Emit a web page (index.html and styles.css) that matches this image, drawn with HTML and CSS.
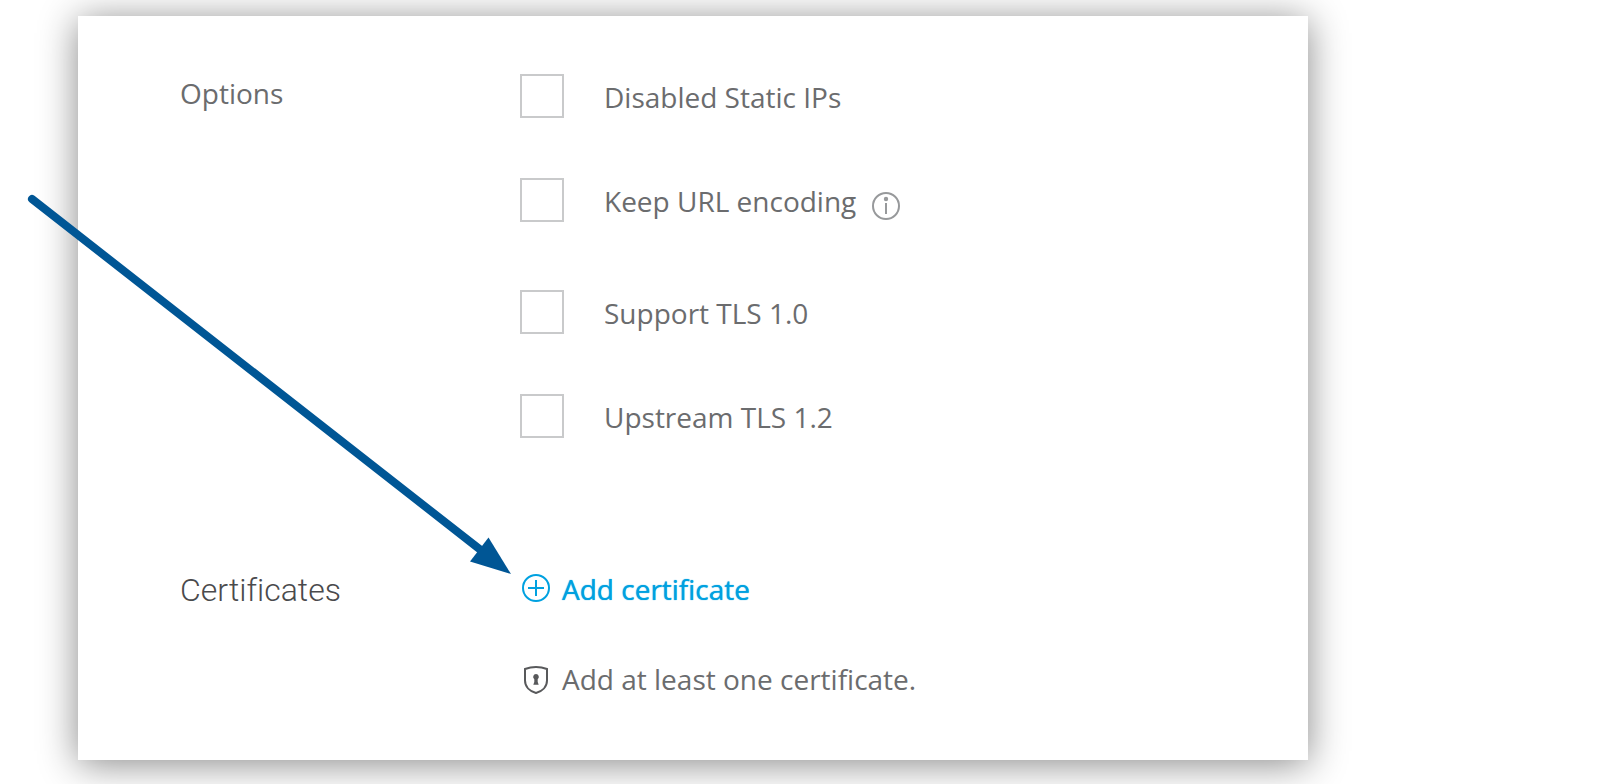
FILE: index.html
```html
<!DOCTYPE html>
<html lang="en">
<head>
<meta charset="utf-8">
<title>Options and certificates</title>
<link rel="stylesheet" href="styles.css">
</head>
<body>
<main class="card">
  <section class="section" aria-labelledby="options-title">
    <h2 class="title" id="options-title">Options</h2>
    <div class="options">
      <div class="option">
        <input class="check" type="checkbox" id="static-ips">
        <label for="static-ips">Disabled Static IPs</label>
      </div>
      <div class="option option-info">
        <input class="check" type="checkbox" id="url-encoding">
        <label for="url-encoding">Keep URL encoding</label>
        <button class="info" type="button" aria-label="About URL encoding">
          <svg class="icon" viewBox="0 0 28 28" aria-hidden="true">
            <circle cx="14" cy="14" r="13" fill="none" stroke="currentColor" stroke-width="2"/>
            <circle cx="14" cy="7" r="2.200" fill="currentColor"/>
            <path d="M14 11V22" stroke="currentColor" stroke-width="2"/>
          </svg>
        </button>
      </div>
      <div class="option">
        <input class="check" type="checkbox" id="tls-10">
        <label for="tls-10">Support TLS 1.0</label>
      </div>
      <div class="option">
        <input class="check" type="checkbox" id="tls-12">
        <label for="tls-12">Upstream TLS 1.2</label>
      </div>
    </div>
  </section>
  <section class="section" aria-labelledby="cert-title">
    <h2 class="title title-light" id="cert-title">Certificates</h2>
    <div class="certificates">
      <button class="add" type="button">
        <svg class="icon" viewBox="0 0 28 28" fill="none" stroke="currentColor" stroke-width="2" aria-hidden="true">
          <circle cx="14" cy="13" r="13"/>
          <path d="M14 5v16M6 13h16"/>
        </svg>
        Add certificate
      </button>
      <p class="hint">
        <svg class="icon shield" viewBox="0 0 28 28" aria-hidden="true">
          <path d="M14 2C10 2 6.500 2.700 3 4v11.500C3 21.500 7.500 26.200 14 28c6.500-1.800 11-6.500 11-12.500V4C21.500 2.700 18 2 14 2z" fill="none" stroke="currentColor" stroke-width="2"/>
          <path d="M14 9a2.900 2.900 0 0 0-1.700 5.200V17l-1 2.800h5.400l-1-2.800v-2.800A2.900 2.900 0 0 0 14 9z" fill="currentColor"/>
        </svg>
        Add at least one certificate.
      </p>
    </div>
  </section>
</main>
<svg class="arrow" width="520" height="600" viewBox="0 0 520 600" aria-hidden="true">
  <path d="M32 199L482 551" stroke="#005695" stroke-width="8" stroke-linecap="round"/>
  <path d="M511 574L488.500 537.500L470 561.500z" fill="#005695"/>
</svg>
</body>
</html>
```
FILE: styles.css
```css
body {
  margin: 0;
  background: #fff;
  color: #6b6c6e;
  font: 28px/46px "Open Sans", "Noto Sans", sans-serif;
}

.card {
  display: flex;
  flex-direction: column;
  gap: 126px;
  margin: 16px 290px 24px 78px;
  padding: 54px 102px 58px;
  background: #fff;
  box-shadow: 0 4px 36px rgba(0, 0, 0, 0.47);
}

.section {
  display: grid;
  grid-template-columns: 340px 1fr;
}

.title {
  margin: 0;
  font-size: 28px;
  font-weight: 400;
}

.title-light {
  color: #4a4a4c;
  font-family: Roboto, sans-serif;
  font-size: 32px;
  font-weight: 300;
  line-height: 48px;
  font-variant-ligatures: none;
}

.options {
  display: flex;
  flex-direction: column;
  gap: 58px;
  padding-top: 4px;
}

.option {
  display: flex;
  align-items: flex-start;
}

.option-info {
  min-height: 54px;
}

.check {
  appearance: none;
  flex: none;
  width: 44px;
  height: 44px;
  margin: 0 40px 0 0;
  border: 2px solid #c9cacb;
  background: #fff;
}

.check:checked {
  background: #00a1e0;
}

.info,
.add {
  padding: 0;
  border: 0;
  background: none;
  font: inherit;
  cursor: pointer;
}

.info {
  display: flex;
  margin: 14px 0 0 16px;
  color: #97999b;
}

.icon {
  flex: none;
  width: 28px;
  height: 28px;
  overflow: visible;
}

.certificates {
  display: flex;
  flex-direction: column;
  align-items: flex-start;
  gap: 44px;
  padding-left: 2px;
}

.add,
.hint {
  display: flex;
  align-items: center;
  gap: 12px;
}

.add {
  color: #00a1e0;
  text-shadow: 0 0 1px currentColor;
}

.hint {
  margin: 0;
  font-variant-ligatures: none;
}

.shield {
  color: #58595b;
}

.arrow {
  position: absolute;
  top: 0;
  left: 0;
  pointer-events: none;
}
```
